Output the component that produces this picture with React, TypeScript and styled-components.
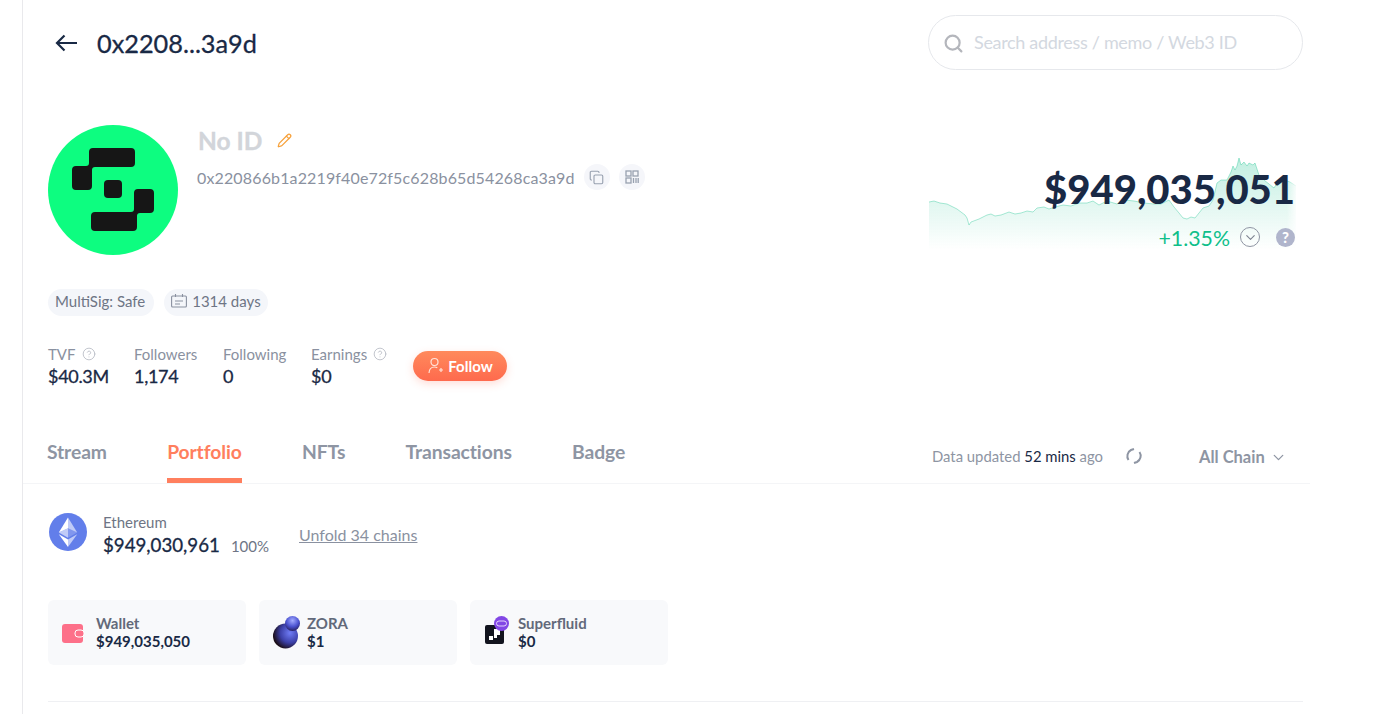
import React from "react";
import styled, { createGlobalStyle, css } from "styled-components";
import { ChevronDown, CircleHelp, Copy, Pencil, Search } from "lucide-react";

const Global = createGlobalStyle`
  html, body { margin: 0; padding: 0; background: #fff; overflow: hidden; }
  body { font-family: Lato, "Liberation Sans", sans-serif; color: #192945; }
  * { box-sizing: border-box; }
`;

const medium = css`
  font-weight: 400;
  -webkit-text-stroke: 0.3px currentColor;
`;

const Page = styled.div`
  margin-left: 22px;
  width: 1288px;
  height: 714px;
  border-left: 1px solid #e9e9ec;
  overflow: hidden;
`;
const Inset = styled.div`
  padding: 0 7px 0 25px;
`;
const Header = styled.header`
  display: flex;
  align-items: center;
  justify-content: space-between;
  height: 85px;
`;
const BackTitle = styled.div`
  display: flex;
  align-items: center;
  gap: 20px;
  padding-left: 7px;
`;
const Title = styled.h1`
  margin: 0;
  font-size: 25.300px;
  line-height: 30px;
  ${medium}
  color: #192945;
`;
const SearchBox = styled.div`
  width: 375px;
  height: 55px;
  border: 1px solid #e6e8ec;
  border-radius: 28px;
  display: flex;
  align-items: center;
  gap: 10px;
  padding: 2px 0 0 14px;
  font-size: 18px;
  letter-spacing: -0.32px;
  color: #d3d8e0;
`;
const SearchText = styled.span`
  margin-top: -3px;
`;
const ProfileRow = styled.section`
  display: flex;
  justify-content: space-between;
  margin-top: 40px;
  height: 130px;
`;
const Identity = styled.div`
  display: flex;
  gap: 19px;
`;
const NameBlock = styled.div`
  display: flex;
  flex-direction: column;
`;
const NameRow = styled.div`
  display: flex;
  align-items: center;
  gap: 15px;
  height: 30px;
`;
const Name = styled.span`
  font-size: 24.500px;
  font-weight: 700;
  -webkit-text-stroke: 0.3px currentColor;
  padding-left: 1px;
  color: #d2d5da;
`;
const AddressRow = styled.div`
  display: flex;
  align-items: center;
  margin-top: 7px;
  height: 30px;
`;
const Address = styled.span`
  font-size: 16px;
  letter-spacing: 0.14px;
  color: #8a91a0;
  margin-right: 9px;
`;
const RoundIcon = styled.span`
  width: 26px;
  height: 26px;
  border-radius: 50%;
  background: #f5f6fa;
  display: flex;
  align-items: center;
  justify-content: center;
  color: #98a1b0;
  margin-right: 9px;
`;
const BalanceBlock = styled.div`
  position: relative;
  width: 375px;
  display: flex;
  flex-direction: column;
  align-items: flex-end;
  padding: 38px 8px 0 0;
`;
const ChartSvg = styled.svg`
  position: absolute;
  left: 0;
  top: 30px;
  mask-image: linear-gradient(to right, #000 0, #000 97%, transparent 100%);
`;
const Balance = styled.div`
  position: relative;
  font-size: 40px;
  line-height: 52px;
  font-weight: 900;
  color: #192945;
`;
const ChangeRow = styled.div`
  position: relative;
  display: flex;
  align-items: center;
  height: 28px;
  margin-top: 8px;
`;
const Change = styled.span`
  font-size: 21.300px;
  color: #0fbf8a;
  margin: 2px 10px 0 0;
`;
const DownCircle = styled.span`
  width: 20px;
  height: 20px;
  border-radius: 50%;
  border: 1.500px solid #8f95a3;
  color: #7d8391;
  display: flex;
  align-items: center;
  justify-content: center;
  margin-right: 16px;
`;
const HelpDot = styled.span`
  width: 19px;
  height: 19px;
  border-radius: 50%;
  background: #b0b5cc;
  color: #fff;
  font-size: 15px;
  font-weight: 900;
  display: flex;
  align-items: center;
  justify-content: center;
`;
const Pills = styled.div`
  display: flex;
  gap: 10px;
  margin-top: 34px;
`;
const Pill = styled.span<{ $end: number }>`
  height: 27px;
  border-radius: 14px;
  background: #f4f6fa;
  padding: 0 ${(p) => p.$end}px 3px 7px;
  display: inline-flex;
  align-items: center;
  gap: 5px;
  font-size: 15px;
  color: #6e7585;
`;
const StatsRow = styled.div`
  display: flex;
  align-items: center;
  margin-top: 27px;
`;
const Stat = styled.div<{ $w: number }>`
  width: ${(p) => p.$w}px;
`;
const StatLabel = styled.div`
  display: flex;
  align-items: center;
  gap: 6px;
  font-size: 15px;
  line-height: 22px;
  color: #8a91a0;
`;
const StatValue = styled.div`
  font-size: 18px;
  line-height: 22px;
  letter-spacing: -0.3px;
  ${medium}
  color: #192945;
`;
const FollowButton = styled.button`
  width: 94px;
  height: 30px;
  margin-top: 1px;
  border: 0;
  border-radius: 15px;
  background: linear-gradient(180deg, #ff8a5c 0%, #fe6a4d 100%);
  box-shadow: 0 3px 8px rgba(254, 106, 77, 0.22);
  color: #fff;
  display: flex;
  align-items: center;
  justify-content: center;
  gap: 4px;
  font: 700 15px Lato, sans-serif;
`;
const TabBar = styled.nav`
  display: flex;
  align-items: flex-start;
  height: 56px;
  margin-top: 41px;
  padding: 0 7px 0 24px;
  border-bottom: 1px solid #f4f5f7;
`;
const Tabs = styled.div`
  display: flex;
  gap: 60.300px;
  flex: 1;
`;
const Tab = styled.span<{ $active?: boolean }>`
  font-size: 19.300px;
  letter-spacing: -0.1px;
  font-weight: 700;
  line-height: 26px;
  padding-top: 11px;
  height: 55px;
  color: ${(p) => (p.$active ? "#ff7f5e" : "#8e95a3")};
  border-bottom: 5px solid ${(p) => (p.$active ? "#ff7f5e" : "transparent")};
`;
const UpdateInfo = styled.div`
  display: flex;
  align-items: center;
  font-size: 14.850px;
  color: #8e95a3;
  height: 51px;
  padding-top: 5px;
`;
const Strong = styled.span`
  color: #192945;
  white-space: pre;
`;
const Refresh = styled.svg`
  margin: 0 56px 0 22px;
`;
const ChainSelect = styled.div`
  display: flex;
  align-items: center;
  gap: 5px;
  width: 104px;
  padding-top: 2px;
  font-size: 16.500px;
  font-weight: 700;
  color: #8e95a3;
`;
const ChainRow = styled.div`
  display: flex;
  align-items: center;
  margin-top: 29px;
  padding-left: 1px;
  height: 38px;
`;
const ChainText = styled.div`
  margin: 5px 0 0 16px;
  width: 196px;
`;
const ChainName = styled.div`
  font-size: 15px;
  line-height: 22px;
  color: #6e7585;
`;
const ChainValue = styled.div`
  display: flex;
  align-items: baseline;
  gap: 11px;
  font-size: 18.700px;
  line-height: 24px;
  ${medium}
  color: #192945;
`;
const Percent = styled.span`
  font-size: 15px;
  font-weight: 400;
  -webkit-text-stroke: 0;
  color: #6e7585;
`;
const Unfold = styled.a`
  font-size: 16px;
  margin-top: 4px;
  color: #8a91a0;
  text-decoration: underline;
`;
const Cards = styled.div`
  display: flex;
  gap: 13px;
  margin-top: 49px;
`;
const Card = styled.div`
  width: 198px;
  height: 65px;
  border-radius: 6px;
  background: #f8f9fb;
  display: flex;
  align-items: center;
  padding: 0 0 2px 14px;
  gap: 10px;
`;
const CardIcon = styled.span`
  position: relative;
  display: block;
  width: 24px;
  height: 34px;
  flex: none;
`;
const IconSvg = styled.svg`
  display: block;
`;
const CardLabel = styled.div`
  font-size: 15px;
  line-height: 18px;
  font-weight: 700;
  color: #62697a;
`;
const CardValue = styled.div`
  font-size: 15px;
  line-height: 18px;
  font-weight: 700;
  color: #192945;
`;
const Divider = styled.hr`
  border: 0;
  border-top: 1px solid #eff0f3;
  margin: 36px 0 0;
`;

const line = [
  [1,47],[6,46],[12,48],[19,49],[23,51],[29,54],[33,57],[37,60],[39,63],[41,70],[43,67],[51,64],[59,60],[63,59],[67,61],[73,60],[81,57],[87,59],[93,58],[99,56],[105,57],[109,53],[116,52],[121,54],[127,52],[135,50],[143,51],[151,48],[159,48],[165,46],[171,50],[179,46],[189,49],[197,45],[206,46],[216,48],[226,49],[233,49],[241,45],[246,52],[251,58],[255,63],[259,64],[263,62],[267,63],[271,58],[275,53],[281,51],[285,45],[289,28],[293,25],[299,25],[303,17],[305,11],[307,15],[309,11],[311,3],[313,10],[316,7],[319,11],[321,8],[325,10],[327,8],[331,20],[336,25],[346,33],[351,25],[356,25],[362,27],[368,31],
];
const pts = line.map((p) => p.join(",")).join(" ");

const stepShape =
  "M45 23H83a4 4 0 0 1 4 4V38a4 4 0 0 1-4 4H47q-3 0-3 3V61a4 4 0 0 1-4 4H28a4 4 0 0 1-4-4V45a4 4 0 0 1 4-4H38q3 0 3-3V27a4 4 0 0 1 4-4Z";

const Avatar = () => (
  <IconSvg width="130" height="130" viewBox="0 0 130 130">
    <circle cx="65" cy="65" r="65" fill="#0dfd80" />
    <g fill="#161616">
      <path d={stepShape} />
      <path d={stepShape} transform="rotate(180 65 64.500)" />
      <rect x="56" y="55" width="18" height="18" rx="4" />
    </g>
  </IconSvg>
);

const EthIcon = () => (
  <IconSvg width="38" height="38" viewBox="0 0 38 38">
    <circle cx="19" cy="19" r="19" fill="#627eea" />
    <path d="M19 4.500v10.800l9.200 4.100z" fill="#fff" fillOpacity=".6" />
    <path d="M19 4.500 9.800 19.400l9.200-4.100z" fill="#fff" />
    <path d="M19 26.500v7.500l9.200-12.800z" fill="#fff" fillOpacity=".6" />
    <path d="M19 26.500v7.500L9.800 21.200z" fill="#fff" />
    <path d="m19 24.800 9.200-5.400-9.200-4.100z" fill="#fff" fillOpacity=".2" />
    <path d="m9.800 19.400 9.200 5.400v-9.500z" fill="#fff" fillOpacity=".6" />
  </IconSvg>
);

const WalletIcon = () => (
  <IconSvg width="24" height="34" viewBox="0 0 24 34">
    <rect x="0" y="9" width="21" height="19" rx="3" fill="#fd7089" />
    <rect x="13" y="15" width="9" height="7" rx="3" fill="#fd7089" stroke="#fff" strokeWidth="1" />
  </IconSvg>
);

const ZoraIcon = () => (
  <IconSvg width="28" height="34" viewBox="0 0 28 34">
    <defs>
      <radialGradient id="zoraBig" cx="68%" cy="38%" r="78%">
        <stop offset="0%" stopColor="#6f7cf5" />
        <stop offset="50%" stopColor="#3c40a8" />
        <stop offset="88%" stopColor="#1a0d14" />
      </radialGradient>
      <radialGradient id="zoraSmall" cx="50%" cy="30%" r="75%">
        <stop offset="0%" stopColor="#a3abff" />
        <stop offset="55%" stopColor="#4a52d0" />
        <stop offset="100%" stopColor="#221a50" />
      </radialGradient>
    </defs>
    <circle cx="12.500" cy="21" r="12.500" fill="url(#zoraBig)" />
    <circle cx="19.500" cy="8.500" r="7.500" fill="url(#zoraSmall)" />
  </IconSvg>
);

const SuperfluidIcon = () => (
  <IconSvg width="26" height="34" viewBox="0 0 26 34">
    <rect x="1" y="10" width="19" height="19" rx="2" fill="#12141e" />
    <path d="M10 14h6v6h-3v3h-3z" fill="#fff" />
    <rect x="5" y="21" width="4" height="4" fill="#fff" />
    <circle cx="17.500" cy="8.500" r="7.500" fill="#8247e5" />
    <rect x="12.500" y="6" width="10" height="5" rx="2.500" fill="none" stroke="#e3d4fb" strokeWidth="1" />
  </IconSvg>
);

const stats = [
  { label: "TVF", value: "$40.3M", help: true, w: 86 },
  { label: "Followers", value: "1,174", help: false, w: 89 },
  { label: "Following", value: "0", help: false, w: 88 },
  { label: "Earnings", value: "$0", help: true, w: 102 },
];
const tabs = ["Stream", "Portfolio", "NFTs", "Transactions", "Badge"];

export default function App() {
  return (
    <Page>
      <Global />
      <Inset>
        <Header>
          <BackTitle>
            <IconSvg width="22" height="18" viewBox="0 0 22 18" fill="none" stroke="#192945" strokeWidth="2.2">
              <path d="M22 9H2M9.500 1.500 2 9l7.500 7.500" />
            </IconSvg>
            <Title>0x2208...3a9d</Title>
          </BackTitle>
          <SearchBox>
            <Search size={21} color="#b4b6bc" strokeWidth={2.5} />
            <SearchText>Search address / memo / Web3 ID</SearchText>
          </SearchBox>
        </Header>
        <ProfileRow>
          <Identity>
            <Avatar />
            <NameBlock>
              <NameRow>
                <Name>No ID</Name>
                <Pencil size={15} color="#f7a13a" strokeWidth={2} />
              </NameRow>
              <AddressRow>
                <Address>0x220866b1a2219f40e72f5c628b65d54268ca3a9d</Address>
                <RoundIcon>
                  <Copy size={15} strokeWidth={1.8} />
                </RoundIcon>
                <RoundIcon>
                  <IconSvg width="14" height="14" viewBox="0 0 14 14" fill="none" stroke="currentColor" strokeWidth="1.3">
                    <rect x="1" y="1" width="5" height="5" />
                    <rect x="8" y="1" width="5" height="5" />
                    <rect x="1" y="8" width="5" height="5" />
                    <path d="M8.500 8v5M11 8v5M13.200 8v5" />
                  </IconSvg>
                </RoundIcon>
              </AddressRow>
            </NameBlock>
          </Identity>
          <BalanceBlock>
            <ChartSvg width="370" height="110" viewBox="0 0 370 110">
              <defs>
                <linearGradient id="area" x1="0" y1="0" x2="0" y2="1">
                  <stop offset="0%" stopColor="#0fbf8a" stopOpacity=".26" />
                  <stop offset="50%" stopColor="#0fbf8a" stopOpacity=".11" />
                  <stop offset="90%" stopColor="#0fbf8a" stopOpacity="0" />
                </linearGradient>
              </defs>
              <polygon points={`1,105 ${pts} 368,105`} fill="url(#area)" />
              <polyline points={pts} fill="none" stroke="#0fbf8a" strokeOpacity=".35" strokeWidth="1" />
            </ChartSvg>
            <Balance>$949,035,051</Balance>
            <ChangeRow>
              <Change>+1.35%</Change>
              <DownCircle>
                <ChevronDown size={15} strokeWidth={1.8} />
              </DownCircle>
              <HelpDot>?</HelpDot>
            </ChangeRow>
          </BalanceBlock>
        </ProfileRow>
        <Pills>
          <Pill $end={9}>MultiSig: Safe</Pill>
          <Pill $end={7}>
            <IconSvg width="16" height="14" viewBox="0 0 16 14" fill="none" stroke="#8a91a0" strokeWidth="1.1">
              <rect x="0.600" y="2" width="14.800" height="11" rx="1" />
              <path d="M4.500 0v3M11.500 0v3M4 7h8M4 10h5" />
            </IconSvg>
            1314 days
          </Pill>
        </Pills>
        <StatsRow>
          {stats.map((s) => (
            <Stat key={s.label} $w={s.w}>
              <StatLabel>
                {s.label}
                {s.help && <CircleHelp size={14} color="#b9bdc6" strokeWidth={1.5} />}
              </StatLabel>
              <StatValue>{s.value}</StatValue>
            </Stat>
          ))}
          <FollowButton>
            <IconSvg width="17" height="17" viewBox="0 0 17 17" fill="none" stroke="#ffe3d8" strokeWidth="1.2">
              <circle cx="7.500" cy="5" r="3.500" />
              <path d="M2 16c.2-3.500 2.300-6 5.500-6 1 0 2 .3 2.800 .8M12 13h4M14 11v4" />
            </IconSvg>
            Follow
          </FollowButton>
        </StatsRow>
      </Inset>
      <TabBar>
        <Tabs>
          {tabs.map((t) => (
            <Tab key={t} $active={t === "Portfolio"}>
              {t}
            </Tab>
          ))}
        </Tabs>
        <UpdateInfo>
          Data updated&nbsp;<Strong>52 mins</Strong>&nbsp;ago
          <Refresh width="18" height="18" viewBox="0 0 18 18" fill="none" stroke="#8e95a3" strokeWidth="2">
            <path d="M3.500 13A7 7 0 0 1 6 3l3-1" />
            <path d="M14.500 5A7 7 0 0 1 12 15l-3 1" />
          </Refresh>
          <ChainSelect>
            All Chain
            <ChevronDown size={17} strokeWidth={1.8} />
          </ChainSelect>
        </UpdateInfo>
      </TabBar>
      <Inset>
        <ChainRow>
          <EthIcon />
          <ChainText>
            <ChainName>Ethereum</ChainName>
            <ChainValue>
              $949,030,961 <Percent>100%</Percent>
            </ChainValue>
          </ChainText>
          <Unfold>Unfold 34 chains</Unfold>
        </ChainRow>
        <Cards>
          <Card>
            <CardIcon><WalletIcon /></CardIcon>
            <div>
              <CardLabel>Wallet</CardLabel>
              <CardValue>$949,035,050</CardValue>
            </div>
          </Card>
          <Card>
            <CardIcon><ZoraIcon /></CardIcon>
            <div>
              <CardLabel>ZORA</CardLabel>
              <CardValue>$1</CardValue>
            </div>
          </Card>
          <Card>
            <CardIcon><SuperfluidIcon /></CardIcon>
            <div>
              <CardLabel>Superfluid</CardLabel>
              <CardValue>$0</CardValue>
            </div>
          </Card>
        </Cards>
        <Divider />
      </Inset>
    </Page>
  );
}
